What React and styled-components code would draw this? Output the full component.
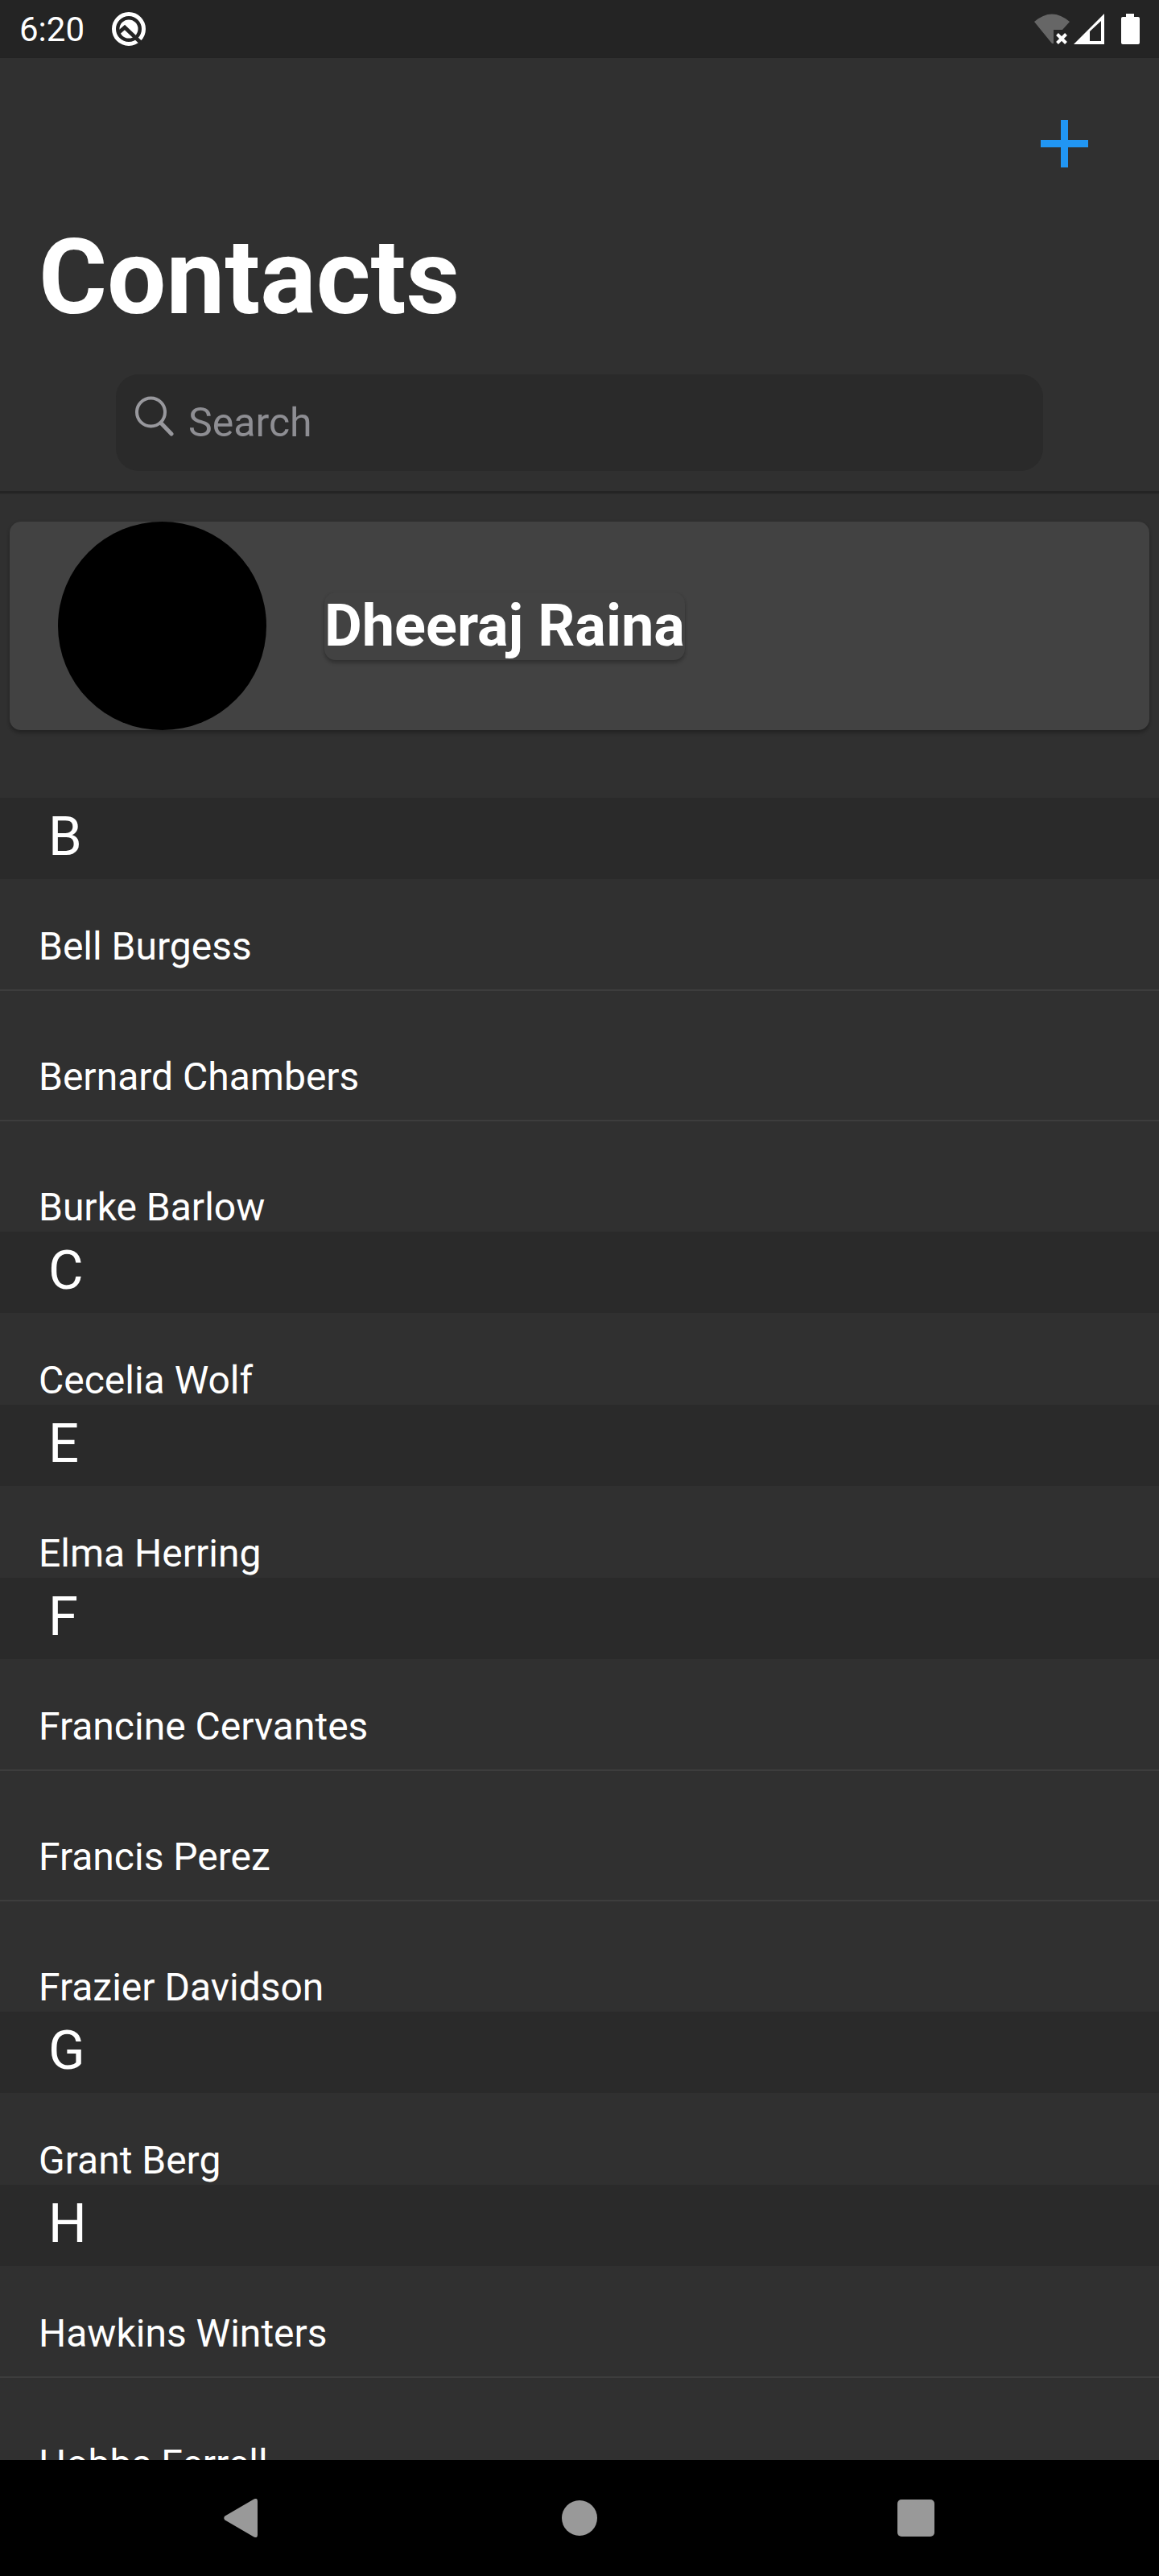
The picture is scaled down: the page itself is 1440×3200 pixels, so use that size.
import React from "react";
import styled, { createGlobalStyle } from "styled-components";

const GlobalStyle = createGlobalStyle`
  *, *::before, *::after { box-sizing: border-box; }
  body { margin: 0; background: #303030; }
  button, input { font: inherit; color: inherit; }
`;

const Screen = styled.div`
  display: flex;
  flex-direction: column;
  height: 100vh;
  overflow: hidden;
  background: #303030;
  color: #fff;
  font-family: Roboto, "Liberation Sans", sans-serif;
`;

const StatusBar = styled.div`
  display: flex;
  flex: none;
  align-items: center;
  justify-content: space-between;
  height: 72px;
  padding: 0 24px;
  background: #242424;
`;

const StatusGroup = styled.div`
  display: flex;
  align-items: center;
  gap: ${(p) => p.$gap}px;
`;

const Clock = styled.time`
  padding-top: 2px;
  font-size: 42px;
  line-height: 48px;
`;

const Glyph = styled.svg`
  display: block;
  flex: none;
  width: ${(p) => p.$w}px;
  height: ${(p) => p.$h}px;
`;

const Header = styled.header`
  flex: none;
  padding-bottom: 25px;
  border-bottom: 3px solid #242424;
  box-shadow: 0 0 1px #242424;
`;

const Actions = styled.div`
  display: flex;
  justify-content: flex-end;
  padding: 54px 66px 0;
`;

const IconButton = styled.button`
  display: flex;
  align-items: center;
  justify-content: center;
  width: 104px;
  height: 104px;
  padding: 0;
  border: 0;
  background: none;
`;

const Title = styled.h1`
  margin: 43px 48px 0;
  font-size: 130px;
  font-weight: 700;
  line-height: 144px;
`;

const SearchBox = styled.label`
  display: flex;
  align-items: center;
  gap: 18px;
  height: 120px;
  margin: 48px 10% 0;
  padding: 0 24px;
  border-radius: 28px;
  background: #2a2a2a;
`;

const SearchIcon = styled(Glyph)`
  margin-bottom: 16px;
`;

const SearchInput = styled.input`
  flex: 1;
  min-width: 0;
  height: 60px;
  padding: 0;
  border: 0;
  outline: 0;
  background: none;
  font-size: 50px;
  &::placeholder { color: #8e8e93; opacity: 1; }
`;

const Main = styled.main`
  flex: 1;
  min-height: 0;
  overflow: hidden;
`;

const raised = `
  background: #424242;
  box-shadow: 0 4px 4px rgba(0, 0, 0, 0.2), 0 1px 4px rgba(0, 0, 0, 0.12);
`;

const ProfileCard = styled.section`
  display: flex;
  align-items: center;
  gap: 72px;
  height: 259px;
  margin: 35px 12px 84px;
  padding: 0 60px;
  border-radius: 14px;
  ${raised}
`;

const Avatar = styled.div`
  flex: none;
  height: 100%;
  aspect-ratio: 1;
  border-radius: 50%;
  background: #000;
`;

const ProfileName = styled.h2`
  margin: 0;
  border-radius: 14px;
  font-size: 72px;
  font-weight: 700;
  line-height: 84px;
  ${raised}
`;

const GroupLetter = styled.h3`
  height: 101px;
  margin: 0;
  padding: 8px 60px;
  background: #2a2a2a;
  font-size: 67px;
  font-weight: 400;
  line-height: 80px;
`;

const ContactList = styled.ul`
  margin: 0;
  padding: 0;
  list-style: none;
`;

const Contact = styled.li`
  padding: 56px 48px 2px;
  font-size: 48px;
  line-height: 56px;
`;

const Divider = styled.li`
  display: flex;
  align-items: center;
  height: 48px;
  &::before {
    content: "";
    flex: 1;
    height: 2px;
    background: #3d3d3d;
  }
`;

const NavBar = styled.nav`
  display: grid;
  flex: none;
  grid-template-columns: repeat(3, 29%);
  justify-content: center;
  justify-items: center;
  align-items: center;
  height: 144px;
  background: #000;
`;

const NavButton = styled(IconButton)`
  width: 96px;
  height: 96px;
`;

const groups = [
  { letter: "B", names: ["Bell Burgess", "Bernard Chambers", "Burke Barlow"] },
  { letter: "C", names: ["Cecelia Wolf"] },
  { letter: "E", names: ["Elma Herring"] },
  { letter: "F", names: ["Francine Cervantes", "Francis Perez", "Frazier Davidson"] },
  { letter: "G", names: ["Grant Berg"] },
  { letter: "H", names: ["Hawkins Winters", "Hobbs Ferrell"] },
];

function StatusIcons() {
  return (
    <StatusGroup $gap={0}>
      <Glyph $w={48} $h={40} viewBox="0 0 48 40" aria-hidden="true">
        <path fill="#666" d="M1 11Q23-8 45 11L36 21H25V38H23Z" />
        <path stroke="#fff" strokeWidth="4" d="M29.500 26.500L40.500 37.500M40.500 26.500L29.500 37.500" />
      </Glyph>
      <Glyph $w={60} $h={40} viewBox="0 0 60 40" aria-hidden="true">
        <path fill="#fff" fillRule="evenodd" d="M2 39L40 1V39ZM22 23V35H36V10Z" />
      </Glyph>
      <Glyph $w={24} $h={40} viewBox="0 0 24 40" aria-hidden="true">
        <path fill="#fff" d="M7 1H17V5H22Q24 5 24 7V37Q24 39 22 39H3Q1 39 1 37V7Q1 5 3 5H7Z" />
      </Glyph>
    </StatusGroup>
  );
}

export default function App() {
  return (
    <Screen>
      <GlobalStyle />
      <StatusBar>
        <StatusGroup $gap={33}>
          <Clock>6:20</Clock>
          <Glyph $w={44} $h={44} viewBox="0 0 44 44" aria-hidden="true">
            <circle cx="22" cy="22" r="18.500" fill="none" stroke="#fff" strokeWidth="5" />
            <circle cx="22" cy="22" r="11.500" fill="#fff" />
            <path d="M9 27L17 20L38 40" fill="none" stroke="#242424" strokeWidth="4.800" />
          </Glyph>
        </StatusGroup>
        <StatusIcons />
      </StatusBar>

      <Header>
        <Actions>
          <IconButton type="button" aria-label="Add contact">
            <Glyph $w={59} $h={59} viewBox="0 0 59 59" aria-hidden="true">
              <path fill="#2196f3" d="M25 0H34V25H59V34H34V59H25V34H0V25H25Z" />
            </Glyph>
          </IconButton>
        </Actions>
        <Title>Contacts</Title>
        <SearchBox>
          <SearchIcon $w={48} $h={50} viewBox="0 0 48 50" aria-hidden="true">
            <circle cx="19.500" cy="20" r="17.500" fill="none" stroke="#98989d" strokeWidth="4" />
            <path d="M32 33.500L45 47" stroke="#98989d" strokeWidth="5" strokeLinecap="round" />
          </SearchIcon>
          <SearchInput type="search" placeholder="Search" aria-label="Search" />
        </SearchBox>
      </Header>

      <Main>
        <ProfileCard>
          <Avatar />
          <ProfileName>Dheeraj Raina</ProfileName>
        </ProfileCard>
        {groups.map((group) => (
          <section key={group.letter}>
            <GroupLetter>{group.letter}</GroupLetter>
            <ContactList>
              {group.names.map((name, i) => (
                <React.Fragment key={name}>
                  {i > 0 && <Divider role="separator" />}
                  <Contact>{name}</Contact>
                </React.Fragment>
              ))}
            </ContactList>
          </section>
        ))}
      </Main>

      <NavBar aria-label="System">
        <NavButton type="button" aria-label="Back">
          <Glyph $w={48} $h={48} viewBox="0 0 48 48" aria-hidden="true">
            <path fill="#999" d="M37.500 .5Q42-1.500 42 3V45Q42 49.500 37.500 47.500L1.500 26.500Q-1 24 1.500 21.500Z" />
          </Glyph>
        </NavButton>
        <NavButton type="button" aria-label="Home">
          <Glyph $w={44} $h={44} viewBox="0 0 44 44" aria-hidden="true">
            <circle cx="22" cy="22" r="22" fill="#999" />
          </Glyph>
        </NavButton>
        <NavButton type="button" aria-label="Recent apps">
          <Glyph $w={46} $h={46} viewBox="0 0 46 46" aria-hidden="true">
            <rect width="46" height="46" rx="5" fill="#999" />
          </Glyph>
        </NavButton>
      </NavBar>
    </Screen>
  );
}
